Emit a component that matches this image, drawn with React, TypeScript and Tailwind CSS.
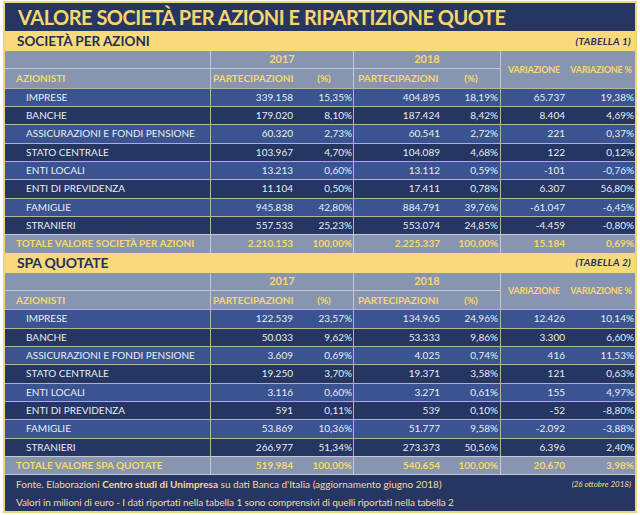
const navy = 'bg-[#253662]';

type Row = string[];

const spa: Row[] = [
  ['IMPRESE', '339.158', '15,35%', '404.895', '18,19%', '65.737', '19,38%'],
  ['BANCHE', '179.020', '8,10%', '187.424', '8,42%', '8.404', '4,69%'],
  ['ASSICURAZIONI E FONDI PENSIONE', '60.320', '2,73%', '60.541', '2,72%', '221', '0,37%'],
  ['STATO CENTRALE', '103.967', '4,70%', '104.089', '4,68%', '122', '0,12%'],
  ['ENTI LOCALI', '13.213', '0,60%', '13.112', '0,59%', '-101', '-0,76%'],
  ['ENTI DI PREVIDENZA', '11.104', '0,50%', '17.411', '0,78%', '6.307', '56,80%'],
  ['FAMIGLIE', '945.838', '42,80%', '884.791', '39,76%', '-61.047', '-6,45%'],
  ['STRANIERI', '557.533', '25,23%', '553.074', '24,85%', '-4.459', '-0,80%'],
];

const quotate: Row[] = [
  ['IMPRESE', '122.539', '23,57%', '134.965', '24,96%', '12.426', '10,14%'],
  ['BANCHE', '50.033', '9,62%', '53.333', '9,86%', '3.300', '6,60%'],
  ['ASSICURAZIONI E FONDI PENSIONE', '3.609', '0,69%', '4.025', '0,74%', '416', '11,53%'],
  ['STATO CENTRALE', '19.250', '3,70%', '19.371', '3,58%', '121', '0,63%'],
  ['ENTI LOCALI', '3.116', '0,60%', '3.271', '0,61%', '155', '4,97%'],
  ['ENTI DI PREVIDENZA', '591', '0,11%', '539', '0,10%', '-52', '-8,80%'],
  ['FAMIGLIE', '53.869', '10,36%', '51.777', '9,58%', '-2.092', '-3,88%'],
  ['STRANIERI', '266.977', '51,34%', '273.373', '50,56%', '6.396', '2,40%'],
];

const cols = 'grid grid-cols-[205px_85px_58px_89px_58px_67px_68px]';
const pads = ['pl-[21px]', 'pr-[2px]', 'pr-[1px]', 'pr-[2px]', 'pr-[2px]', 'pr-[2px]', 'pr-[1px]'];
const vline = [false, true, false, true, false, true, false];

function DataRow({ row, light }: { row: Row; light: boolean }) {
  return (
    <div className={`${cols} h-[18.33px] border-t border-[#b8b49c] ${light ? 'bg-[#3a5491]' : navy} text-[#e9ecf4] text-[10px]`}>
      {row.map((v, i) => (
        <div
          key={i}
          className={`flex items-center ${i === 0 ? 'justify-start' : 'justify-end'} ${pads[i]} ${vline[i] ? 'border-l border-[#b8b49c]' : ''} whitespace-nowrap`}
        >
          {v}
        </div>
      ))}
    </div>
  );
}

function Table({ title, tab, rows, total, titleSize }: { title: string; tab: string; rows: Row[]; total: Row; titleSize: string }) {
  const hl = 'border-[#c4c9d6]';
  return (
    <div>
      <div className="h-[20px] bg-[#f8da7b] flex items-center justify-between pl-[12px] pr-[4px]">
        <span className={`font-bold text-[#23305a] ${titleSize}`}>{title}</span>
        <span className="font-bold italic text-[#23305a] text-[10px] tracking-[0.3px]">{tab}</span>
      </div>
      <div className={`${cols} grid-rows-[18.33px_18.33px] bg-[#8795b0] text-[#f6d86c] font-bold text-[10px]`}>
        <div className={`border-b ${hl}`} />
        <div className={`col-span-2 border-l border-b ${hl} flex items-center justify-center text-[11px]`}>2017</div>
        <div className={`col-span-2 border-l border-b ${hl} flex items-center justify-center text-[11px]`}>2018</div>
        <div className={`row-span-2 border-l ${hl} flex items-center justify-center text-[9px] tracking-[-0.2px]`}>VARIAZIONE</div>
        <div className="row-span-2 flex items-center justify-center whitespace-nowrap text-[9px] tracking-[-0.2px]">VARIAZIONE %</div>
        <div className="flex items-center pl-[11px]">AZIONISTI</div>
        <div className={`border-l ${hl} flex items-center pl-[2px]`}>PARTECIPAZIONI</div>
        <div className="flex items-center justify-center">(%)</div>
        <div className={`border-l ${hl} flex items-center pl-[4px]`}>PARTECIPAZIONI</div>
        <div className="flex items-center justify-center">(%)</div>
      </div>
      {rows.map((r, i) => (
        <DataRow key={i} row={r} light={i % 2 === 0} />
      ))}
      <div className={`${cols} h-[18.33px] border-t ${hl} bg-[#8795b0] text-[#f6d86c] font-bold text-[10px]`}>
        {total.map((v, i) => (
          <div
            key={i}
            className={`flex items-center ${i === 0 ? 'justify-start pl-[11px]' : `justify-end ${pads[i]}`} ${vline[i] ? `border-l ${hl}` : ''} whitespace-nowrap`}
          >
            {v}
          </div>
        ))}
      </div>
    </div>
  );
}

export default function App() {
  return (
    <div className="w-[640px] h-[515px] bg-white pt-[1px] pl-[3px]" style={{ fontFamily: 'Lato, "Liberation Sans", sans-serif' }}>
      <div className="w-[634px] border-2 border-[#efd47c]">
        <div className={`h-[28px] ${navy} flex items-center pl-[13px]`}>
          <h1 className="text-[20px] font-bold text-[#f6d76b] tracking-[-0.5px] leading-none">
            VALORE SOCIETÀ PER AZIONI E RIPARTIZIONE QUOTE
          </h1>
        </div>
        <Table
          title="SOCIETÀ PER AZIONI"
          tab="(TABELLA 1)"
          rows={spa}
          titleSize="text-[13.5px]"
          total={['TOTALE VALORE SOCIETÀ PER AZIONI', '2.210.153', '100,00%', '2.225.337', '100,00%', '15.184', '0,69%']}
        />
        <Table
          title="SPA QUOTATE"
          tab="(TABELLA 2)"
          rows={quotate}
          titleSize="text-[14px] tracking-[-0.2px]"
          total={['TOTALE VALORE SPA QUOTATE', '519.984', '100,00%', '540.654', '100,00%', '20.670', '3,98%']}
        />
        <div className={`${navy} h-[37px] border-t border-[#c4c9d6] text-[#f1dc93] text-[10px] pl-[11px] pr-[4px] flex flex-col justify-around`}>
          <div className="flex items-center justify-between">
            <span>
              Fonte. Elaborazioni <b>Centro studi di Unimpresa</b> su dati Banca d'Italia (aggiornamento giugno 2018)
            </span>
            <span className="italic text-[8px]">(26 ottobre 2018)</span>
          </div>
          <div className="tracking-[-0.1px]">Valori in milioni di euro - I dati riportati nella tabella 1 sono comprensivi di quelli riportati nella tabella 2</div>
        </div>
      </div>
    </div>
  );
}
